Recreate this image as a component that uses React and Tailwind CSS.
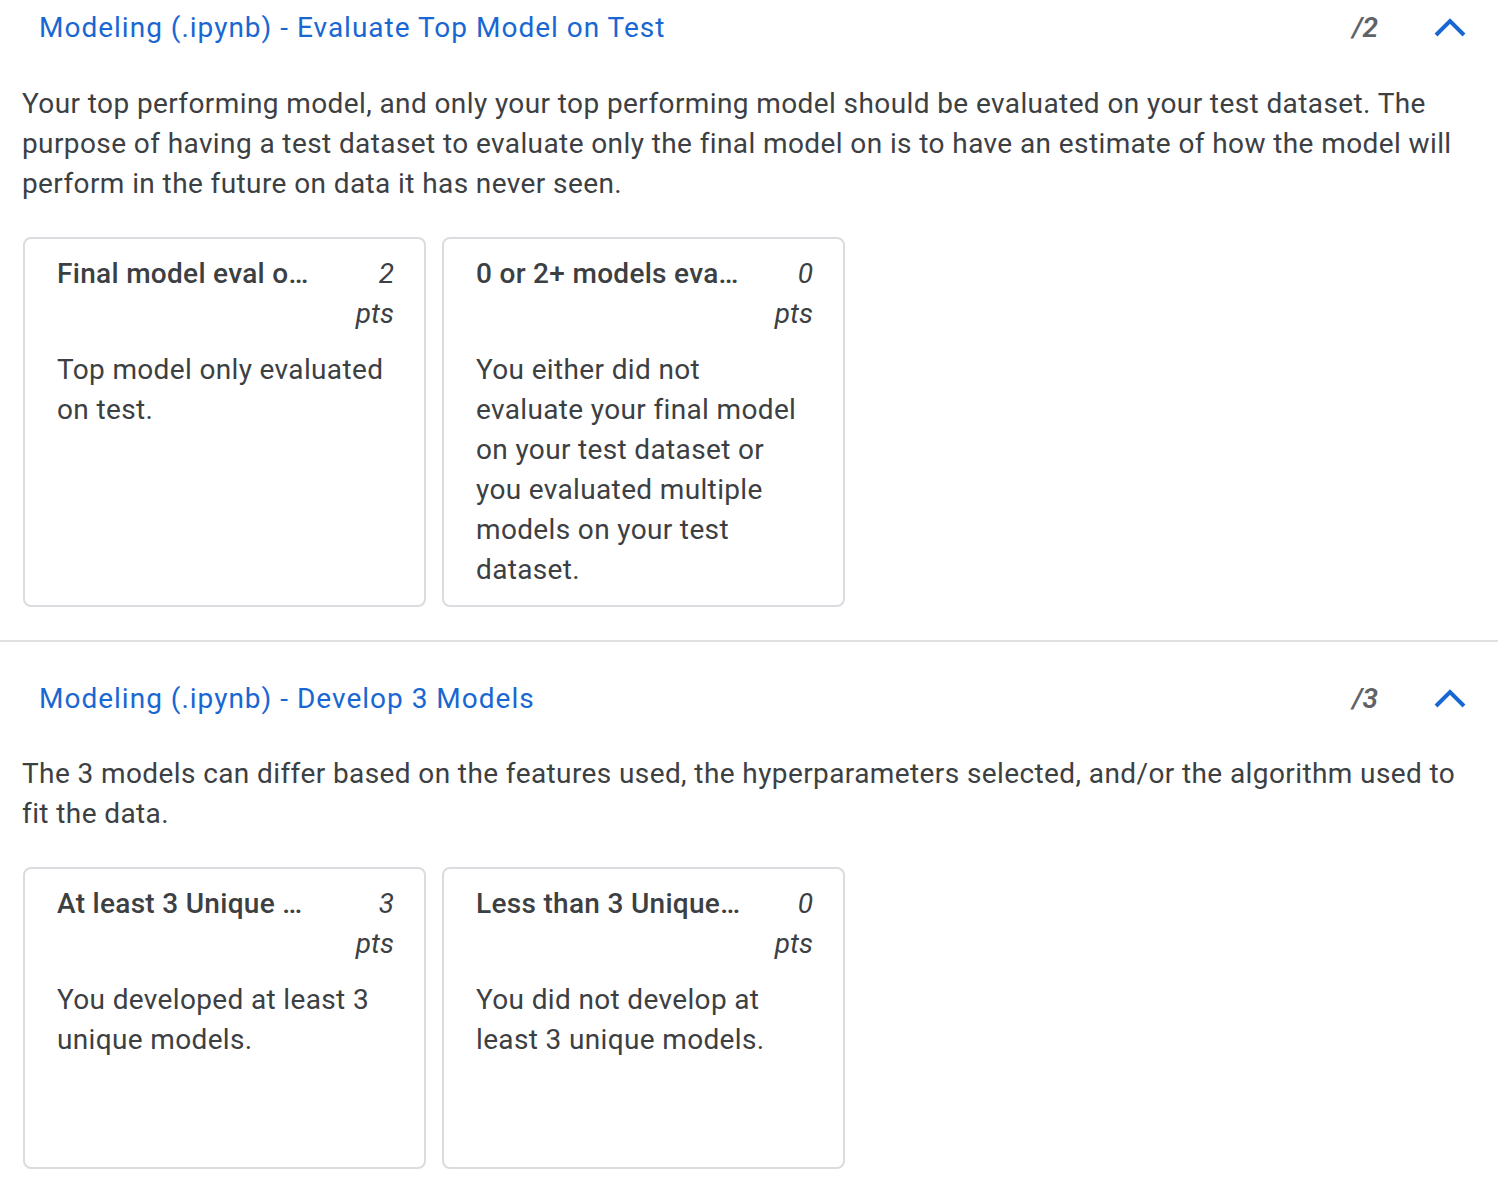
import React from "react";

const sections = [
  {
    title: "Modeling (.ipynb) - Evaluate Top Model on Test",
    score: "/2",
    description:
      "Your top performing model, and only your top performing model should be evaluated on your test dataset. The purpose of having a test dataset to evaluate only the final model on is to have an estimate of how the model will perform in the future on data it has never seen.",
    top: "pt-[8px]",
    gap: "mt-[36px]",
    levels: [
      { name: "Final model eval on test", pts: 2, text: "Top model only evaluated on test." },
      {
        name: "0 or 2+ models evaluated on test",
        pts: 0,
        text: "You either did not evaluate your final model on your test dataset or you evaluated multiple models on your test dataset.",
      },
    ],
  },
  {
    title: "Modeling (.ipynb) - Develop 3 Models",
    score: "/3",
    description:
      "The 3 models can differ based on the features used, the hyperparameters selected, and/or the algorithm used to fit the data.",
    top: "pt-[37px]",
    gap: "mt-[35px]",
    levels: [
      { name: "At least 3 Unique Models", pts: 3, text: "You developed at least 3 unique models." },
      { name: "Less than 3 Unique Models", pts: 0, text: "You did not develop at least 3 unique models." },
    ],
  },
];

function Chevron() {
  return (
    <svg width="32" height="20" viewBox="0 0 32 20" className="ml-[56px] mr-[10px]">
      <polyline points="2,17 16,3 30,17" fill="none" stroke="#1967d2" strokeWidth="4" />
    </svg>
  );
}

function Card({ level }) {
  return (
    <div className="w-[403px] min-h-[302px] border-2 border-[#dadce0] rounded-[8px] pl-[32px] pr-[30px] pt-[15px] pb-[15px]">
      <div className="flex">
        <div className="w-[266px] truncate font-medium text-[28px] leading-[40px] tracking-[0.3px]">{level.name}</div>
        <div className="w-[48px] ml-auto text-right italic text-[28px] leading-[40px]">
          {level.pts} pts
        </div>
      </div>
      <p className="mt-[16px] text-[28px] leading-[40px] tracking-[0.35px]">{level.text}</p>
    </div>
  );
}

function Section({ s }) {
  return (
    <div className={`px-[22px] pb-[33px] ${s.top}`}>
      <div className="flex items-center h-[40px]">
        <div className="pl-[17px] flex-1 text-[28px] leading-[40px] tracking-[1px] text-[#1967d2]">{s.title}</div>
        <span className="italic font-semibold text-[28px] text-[#5f6368]">{s.score}</span>
        <Chevron />
      </div>
      <p className={`${s.gap} text-[28px] leading-[40px] tracking-[0.4px]`}>{s.description}</p>
      <div className="mt-[33px] pl-[1px] flex gap-[16px]">
        {s.levels.map((l) => (
          <Card key={l.name} level={l} />
        ))}
      </div>
    </div>
  );
}

export default function App() {
  return (
    <div className="w-[1498px] h-[1182px] overflow-hidden bg-white text-[#3c4043] font-['Roboto',sans-serif]">
      <Section s={sections[0]} />
      <div className="h-[2px] bg-[#e0e0e0]" />
      <Section s={sections[1]} />
    </div>
  );
}
